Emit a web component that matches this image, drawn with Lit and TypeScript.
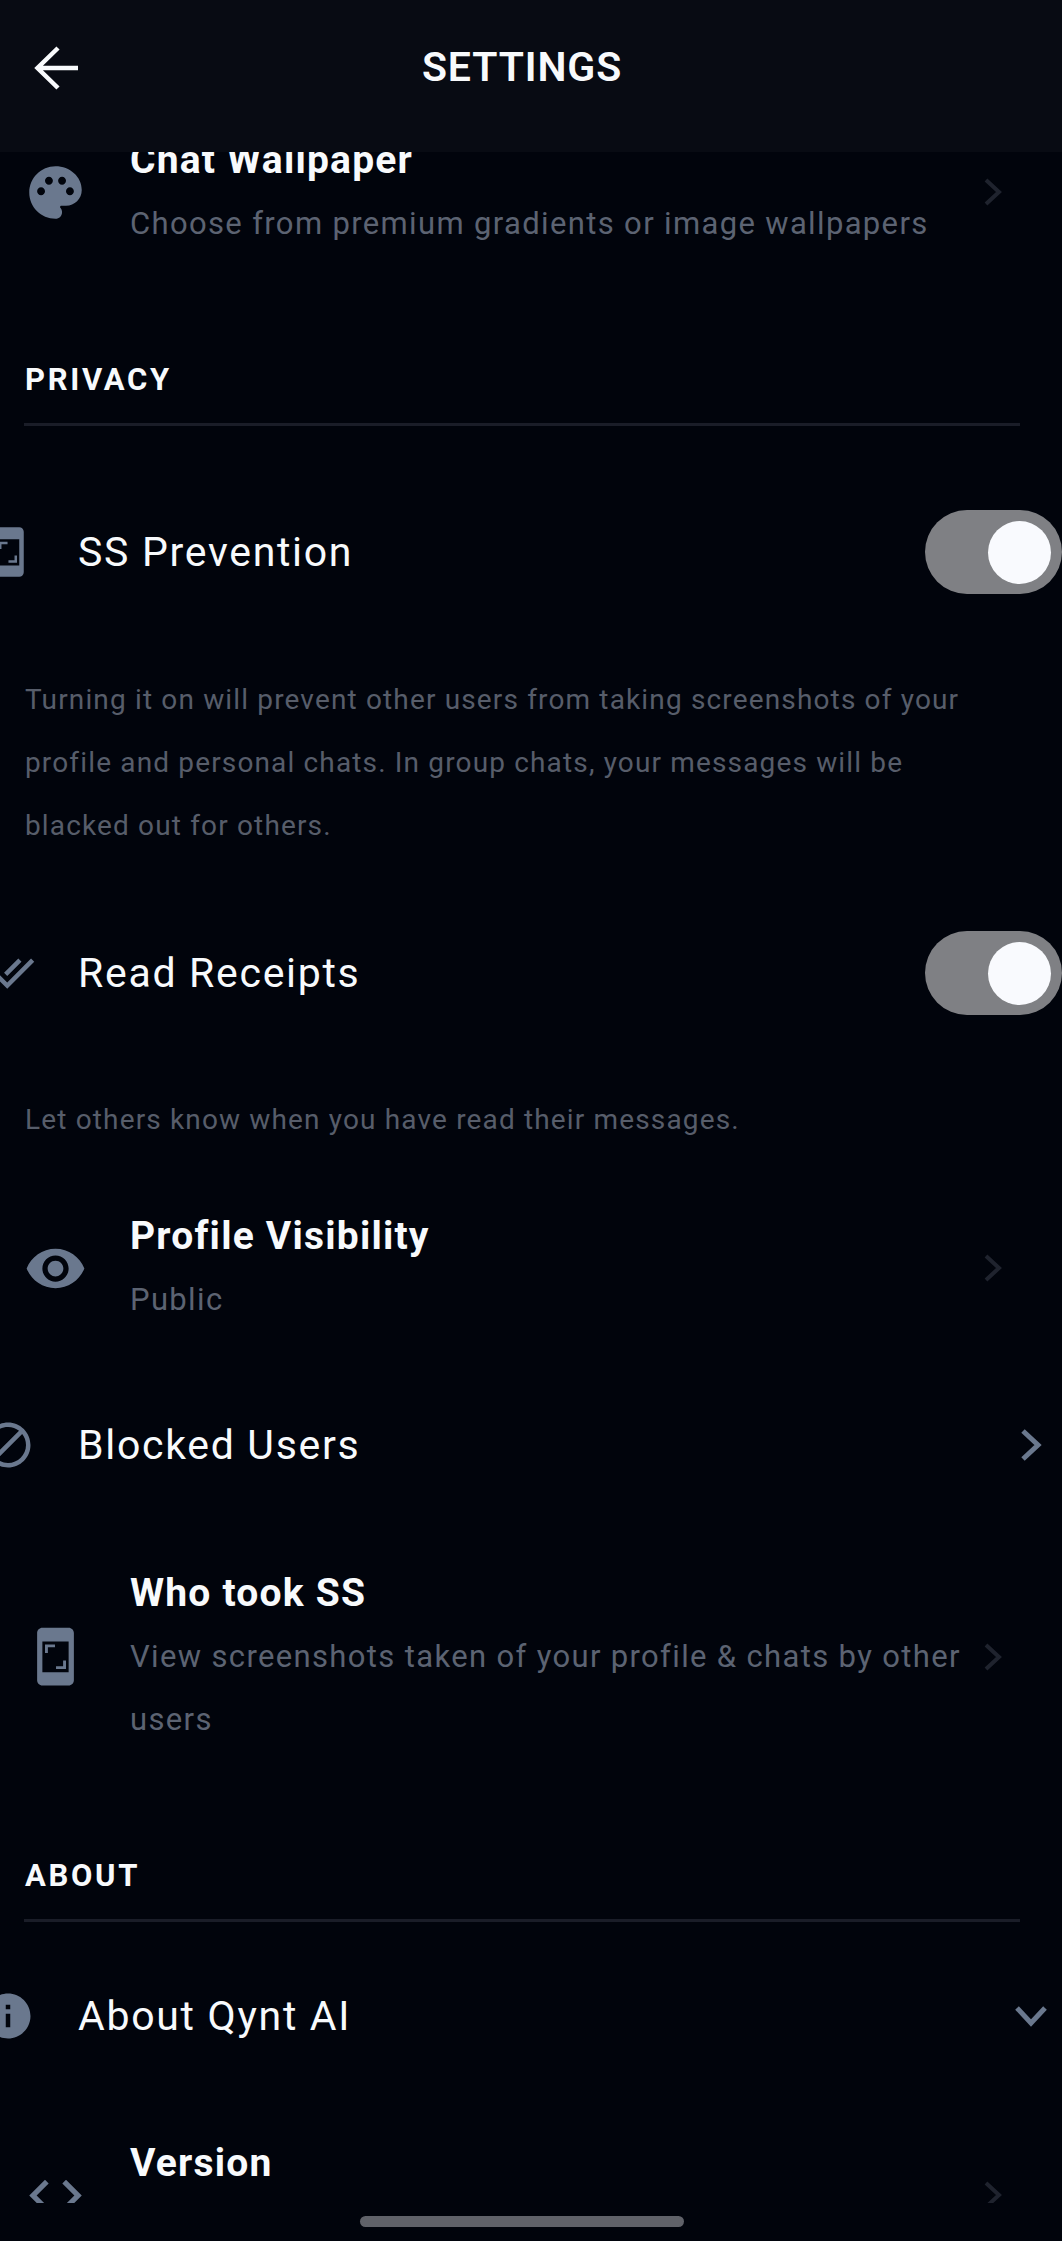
import { LitElement, html, css, svg, nothing } from 'lit';
import { customElement } from 'lit/decorators.js';

const icons = {
  palette: svg`<path d="M12 2C6.49 2 2 6.49 2 12s4.49 10 10 10c1.38 0 2.5-1.12 2.5-2.5 0-.61-.23-1.2-.64-1.67-.08-.1-.13-.21-.13-.33 0-.28.22-.5.5-.5H16c3.31 0 6-2.69 6-6 0-4.96-4.49-9-10-9zm5.5 11c-.83 0-1.5-.67-1.5-1.5s.67-1.5 1.5-1.5 1.5.67 1.5 1.5-.67 1.5-1.5 1.5zm-3-4c-.83 0-1.5-.67-1.5-1.5S13.67 6 14.5 6s1.5.67 1.5 1.5S15.33 9 14.5 9zM5 11.5c0-.83.67-1.5 1.5-1.5s1.5.67 1.5 1.5S7.33 13 6.5 13 5 12.33 5 11.5zm6-4c0 .83-.67 1.5-1.5 1.5S8 8.33 8 7.5 8.67 6 9.5 6s1.5.67 1.5 1.5z"/>`,
  screenshot: svg`<path fill-rule="evenodd" d="M7 1h10c1.1 0 2 .9 2 2v18c0 1.1-.9 2-2 2H7c-1.1 0-2-.9-2-2V3c0-1.1.9-2 2-2zm0 5.3V18h10V6.300zM8 7.400h3.800v1.100H9.100v2.200H8zM16 16.800h-3.800v-1.100h2.700v-2.200H16z"/>`,
  check: svg`<path d="M18 7l-1.41-1.41-6.34 6.34 1.41 1.41L18 7zm4.240-1.410L11.660 16.170 7.480 12l-1.410 1.410L11.660 19l12-12-1.420-1.410zM.410 13.410L6 19l1.410-1.410L1.830 12 .410 13.410z"/>`,
  eye: svg`<path d="M12 4.500C7 4.500 2.730 7.610 1 12c1.730 4.390 6 7.500 11 7.500s9.270-3.110 11-7.500c-1.730-4.390-6-7.500-11-7.500zM12 17c-2.760 0-5-2.240-5-5s2.240-5 5-5 5 2.240 5 5-2.240 5-5 5zm0-8c-1.660 0-3 1.340-3 3s1.340 3 3 3 3-1.340 3-3-1.340-3-3-3z"/>`,
  block: svg`<path d="M12 2C6.480 2 2 6.480 2 12s4.480 10 10 10 10-4.480 10-10S17.520 2 12 2zM4 12c0-4.420 3.580-8 8-8 1.850 0 3.550.630 4.900 1.690L5.690 16.900C4.630 15.550 4 13.850 4 12zm8 8c-1.850 0-3.550-.630-4.900-1.690L18.310 7.100C19.370 8.450 20 10.150 20 12c0 4.420-3.580 8-8 8z"/>`,
  info: svg`<path d="M12 2C6.480 2 2 6.480 2 12s4.480 10 10 10 10-4.480 10-10S17.520 2 12 2zm1 15h-2v-6h2v6zm0-8h-2V7h2v2z"/>`,
  code: svg`<path d="M9.400 16.600L4.800 12l4.600-4.600L8 6l-6 6 6 6 1.400-1.400zm5.200 0l4.600-4.600-4.600-4.600L16 6l6 6-6 6-1.400-1.400z"/>`,
};

type IconName = keyof typeof icons;

@customElement('app-root')
export class AppRoot extends LitElement {
  static styles = css`
    :host {
      display: block;
      position: relative;
      width: 1062px;
      height: 2241px;
      overflow: hidden;
      background: #01040c;
      color: #f8fafc;
      font-family: Roboto, "Liberation Sans", sans-serif;
    }
    .header {
      height: 152px;
      background: #080b13;
      display: flex;
      align-items: center;
      justify-content: center;
      padding: 0 18px 18px 0;
      box-sizing: border-box;
      position: relative;
    }
    .back {
      position: absolute;
      left: 32px;
      top: 44px;
      width: 50px;
      height: 48px;
    }
    .back path {
      fill: none;
      stroke: #f8fafc;
      stroke-width: 4.500;
    }
    .heading {
      font-size: 41px;
      font-weight: 600;
      letter-spacing: 0.900px;
    }
    .scroll {
      height: 2051px;
      overflow: hidden;
    }
    .content {
      margin-top: -23px;
    }
    .tile {
      display: grid;
      grid-template-columns: 110px 1fr 62px;
      column-gap: 20px;
      align-items: center;
      width: 1043px;
    }
    .tile-text {
      min-width: 0;
      align-self: start;
    }
    .tile-title {
      font-size: 39px;
      font-weight: 700;
      line-height: 63px;
      letter-spacing: 1.200px;
    }
    .tile-sub {
      font-size: 31px;
      line-height: 63px;
      letter-spacing: 1.350px;
      color: #5c6372;
    }
    .icon {
      display: block;
      fill: #6a788e;
      justify-self: center;
    }
    .icon-lg {
      width: 63px;
      height: 63px;
    }
    .icon-sm {
      width: 54px;
      height: 54px;
    }
    .chev {
      display: block;
      fill: none;
      stroke: #1f232e;
      stroke-width: 4;
      width: 20px;
      height: 30px;
      margin-left: 2px;
    }
    .section {
      margin: 103px 0 0 25px;
      font-size: 31px;
      font-weight: 700;
      line-height: 44px;
      letter-spacing: 2.700px;
    }
    .section.second {
      margin-top: 103px;
    }
    .rule {
      height: 3px;
      margin: 21px 42px 0 24px;
      background: #1a1d28;
    }
    .plain {
      display: grid;
      grid-template-columns: 110px 1fr auto;
      column-gap: 15px;
      align-items: center;
      height: 84px;
      margin-left: -47px;
    }
    .plain-label {
      font-size: 41px;
      letter-spacing: 1.700px;
      color: #f8fafc;
    }
    .switch {
      box-sizing: border-box;
      width: 137px;
      height: 84px;
      border-radius: 42px;
      background: #7f8084;
      display: flex;
      align-items: center;
      justify-content: flex-end;
      padding-right: 11px;
    }
    .knob {
      width: 63px;
      height: 63px;
      border-radius: 50%;
      background: #f9fafe;
    }
    .plain-chev {
      display: block;
      fill: none;
      stroke: #6a788e;
      stroke-width: 5;
      margin-right: 20px;
    }
    .plain-chev.down {
      margin-right: 14px;
    }
    .desc {
      margin: 74px 80px 0 25px;
      font-size: 28px;
      line-height: 63px;
      letter-spacing: 1.150px;
      color: #575d6a;
    }
    .gap-switch { margin-top: 84px; }
    .gap-74 { margin-top: 74px; }
    .gap-72 { margin-top: 72px; }
    .gap-73 { margin-top: 73px; }
    .gap-75 { margin-top: 75px; }
    .gap-54 { margin-top: 54px; }
    .gap-52 { margin-top: 52px; }
    .home {
      position: absolute;
      left: 360px;
      top: 2216px;
      width: 324px;
      height: 11px;
      border-radius: 6px;
      background: #606269;
    }
  `;

  private icon(name: IconName, size: 'lg' | 'sm') {
    return html`<svg class="icon icon-${size}" viewBox="0 0 24 24">${icons[name]}</svg>`;
  }

  private tile(icon: IconName, title: string, sub: string, cls = '') {
    return html`
      <div class="tile ${cls}">
        ${this.icon(icon, 'lg')}
        <div class="tile-text">
          <div class="tile-title">${title}</div>
          <div class="tile-sub">${sub || html`&nbsp;`}</div>
        </div>
        <svg class="chev" viewBox="0 0 20 30"><path d="M3 3l13 12L3 27"/></svg>
      </div>
    `;
  }

  private plain(icon: IconName, label: string, trailing: unknown, cls = '') {
    return html`
      <div class="plain ${cls}">
        ${this.icon(icon, 'sm')}
        <div class="plain-label">${label}</div>
        ${trailing ?? nothing}
      </div>
    `;
  }

  render() {
    const toggle = html`<div class="switch"><div class="knob"></div></div>`;
    const right = html`<svg class="plain-chev" width="24" height="34" viewBox="0 0 24 34"><path d="M5 3l15 14L5 31"/></svg>`;
    const down = html`<svg class="plain-chev down" width="34" height="24" viewBox="0 0 34 24"><path d="M3 4l14 15L31 4"/></svg>`;

    return html`
      <div class="header">
        <svg class="back" viewBox="0 0 50 48"><path d="M46 24H8M26 4L5.500 24 26 44"/></svg>
        <div class="heading">SETTINGS</div>
      </div>
      <div class="scroll">
        <div class="content">
          ${this.tile('palette', 'Chat Wallpaper', 'Choose from premium gradients or image wallpapers')}

          <div class="section">PRIVACY</div>
          <div class="rule"></div>
          ${this.plain('screenshot', 'SS Prevention', toggle, 'gap-switch')}
          <div class="desc">Turning it on will prevent other users from taking screenshots of your profile and personal chats. In group chats, your messages will be blacked out for others.</div>
          ${this.plain('check', 'Read Receipts', toggle, 'gap-74')}
          <div class="desc gap-73">Let others know when you have read their messages.</div>
          ${this.tile('eye', 'Profile Visibility', 'Public', 'gap-54')}
          ${this.plain('block', 'Blocked Users', right, 'gap-72')}
          ${this.tile('screenshot', 'Who took SS', 'View screenshots taken of your profile & chats by other users', 'gap-75')}

          <div class="section second">ABOUT</div>
          <div class="rule"></div>
          ${this.plain('info', 'About Qynt AI', down, 'gap-52')}
          ${this.tile('code', 'Version', '', 'gap-74')}
        </div>
      </div>
      <div class="home"></div>
    `;
  }
}
